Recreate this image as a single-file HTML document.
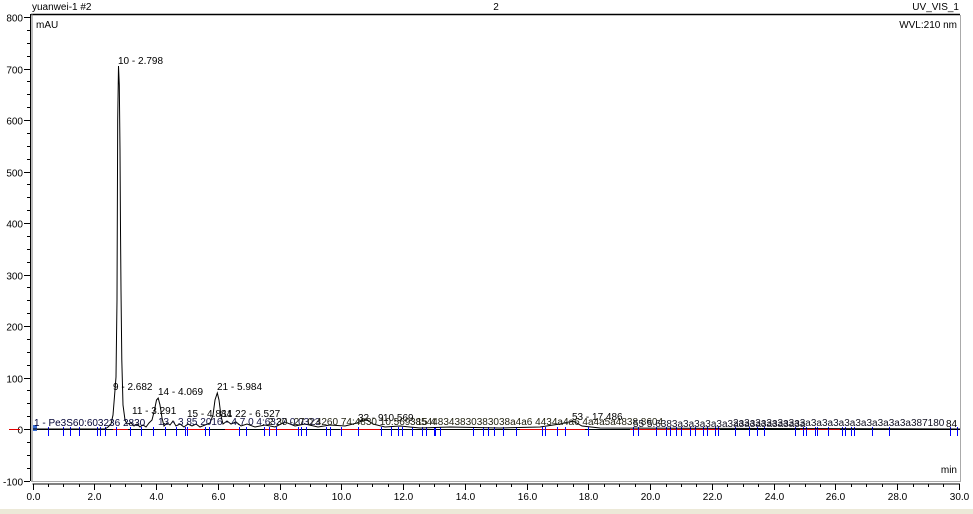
<!DOCTYPE html>
<html><head><meta charset="utf-8"><style>
html,body{margin:0;padding:0;background:#fff;width:973px;height:514px;overflow:hidden}
svg{display:block;font-family:"Liberation Sans",Arial,sans-serif}
</style></head><body>
<svg id="s" width="973" height="514" viewBox="0 0 973 514" xmlns="http://www.w3.org/2000/svg">
<rect x="0" y="0" width="973" height="514" fill="#fff"/>
<rect x="0" y="509" width="973" height="5" fill="#ece9d8"/>
<text x="32" y="10" font-size="10" fill="#000">yuanwei-1 #2</text>
<text x="496" y="10" font-size="10" fill="#000" text-anchor="middle">2</text>
<text x="959" y="10" font-size="10" fill="#000" text-anchor="end">UV_VIS_1</text>
<line x1="31" y1="14.5" x2="960" y2="14.5" stroke="#000" stroke-width="1.5"/>
<line x1="30.5" y1="14" x2="30.5" y2="481" stroke="#000" stroke-width="1"/>
<line x1="32" y1="14" x2="32" y2="481" stroke="#777" stroke-width="1"/>
<line x1="960.5" y1="15" x2="960.5" y2="481" stroke="#aaa" stroke-width="1"/>
<line x1="31" y1="481.5" x2="961" y2="481.5" stroke="#aaa" stroke-width="1"/>
<text x="36" y="28" font-size="10" fill="#000">mAU</text>
<text x="957" y="28" font-size="10" fill="#000" text-anchor="end">WVL:210 nm</text>
<text x="957" y="473" font-size="10" fill="#000" text-anchor="end">min</text>
<g id="axes" stroke="#000" stroke-width="1"></g>
<g id="lab" font-size="10" fill="#000"></g>
<line x1="33" y1="429.5" x2="960" y2="429.5" stroke="#000" stroke-width="1"/>
<g id="red" stroke="#e00000" stroke-width="1"></g>
<g id="blue" stroke="#0000ff" stroke-width="1"></g>
<path fill="none" stroke="#000" stroke-width="1" d="M33 429 L105 429 L108 427 L111 424 L113 415 L115 390 L116 377 L117 300 L117.7 120 L118.5 66 L119.3 85 L120 150 L120.5 230 L121 290 L121.8 360 L123 405 L125 420 L127 424 L131 423 L134 426 L137 424 L140 427 L143 425 L146 427 L149 423 L152 420 L154.5 410 L156.5 400 L158.2 398 L160 405 L162 418 L164 426 L167 423 L170 425 L173 421 L176 426 L180 424 L184 427 L188 424 L192 426 L196 424 L200 427 L205 425 L210 423 L213 415 L215 400 L217.3 393 L219 400 L221 416 L223 424 L227 421 L231 424 L236 422 L241 426 L247 424 L255 427 L265 425 L275 427 L285 422 L295 426 L305 424 L318 427 L330 425 L345 426 L357 423 L366 419 L373 424 L385 427 L400 426 L420 428 L450 427 L500 428 L540 427 L560 424 L573 421 L582 426 L600 428 L960 429"/>
<g font-size="10" fill="#000">
<text x="118" y="64">10 - 2.798</text>
<text x="113" y="390">9 - 2.682</text>
<text x="158" y="395">14 - 4.069</text>
<text x="217" y="390">21 - 5.984</text>
<text x="132" y="414">11 - 3.291</text>
<text x="187" y="417">15 - 4.884</text>
<text x="222" y="417">11  22 - 6.527</text>
<text x="358" y="421">32 - 9</text>
<text x="383" y="421">10.569</text>
<text x="572" y="420">53 - 17.486</text>
<text x="34" y="426" fill="#003">1 - Pe3S60:603236 2830</text>
<text x="158" y="425" fill="#114">13 - 3 85 2016 - 4.7 0 4:6327 0.0323</text>
<text x="268" y="425" fill="#221">2 30 ·27 0:4260 74:4830 10.569 ·15 4</text>
<text x="410" y="425" fill="#221">385448343830383038a4a6 4434a4a6 4a4a5a4838  8604</text>
<text x="633" y="427" fill="#112">55  5.6383a3a3a3a3a3a3a3a3a3a3a3a</text>
<text x="733" y="426" fill="#112">2a3a3a3a3a3a3a3a3a3a3a3a3a3a3a3a387180</text>
<text x="946" y="427">84</text>
</g>
</svg>
<script>
var NS="http://www.w3.org/2000/svg";
function el(p,t,a,txt){var e=document.createElementNS(NS,t);for(var k in a)e.setAttribute(k,a[k]);if(txt!=null)e.textContent=txt;document.getElementById(p).appendChild(e);}
function Y(v){return 429-0.515*v;}
function X(t){return 32.5+30.88*t;}
for(var v=-100;v<=800;v+=25){var y=Math.round(Y(v))+0.5;el("axes","line",{x1:(v%100==0?24:27),y1:y,x2:30,y2:y});
 if(v%100==0)el("lab","text",{x:23,y:y+4,"text-anchor":"end"},String(v));}
el("axes","line",{x1:32.5,y1:484,x2:960,y2:484});
for(var t=0;t<=30.001;t+=0.5){var x=Math.round(X(t))+0.5;var maj=Math.abs(t%2)<0.01;el("axes","line",{x1:x,y1:484,x2:x,y2:maj?490:487});
 if(maj||Math.abs(t-30)<0.01)el("lab","text",{x:x,y:500,"text-anchor":"middle"},t.toFixed(1));}
var bl=[0.5,1.0,1.2,1.5,2.1,2.2,2.35,2.7,3.15,3.5,3.9,4.3,4.65,4.95,5.0,5.6,5.7,6.7,6.9,7.5,7.65,7.9,8.6,8.7,8.85,9.5,9.65,10.0,10.55,11.3,11.6,11.85,11.95,12.3,12.6,12.75,13.0,13.05,13.2,14.25,14.6,14.75,14.95,15.25,15.65,16.5,16.6,17.0,17.25,18.0,19.45,19.6,20.2,20.5,20.65,20.85,21.0,21.3,21.45,21.7,21.85,22.1,22.2,22.75,23.2,23.45,23.7,24.7,24.95,25.05,25.35,25.4,25.75,26.2,26.3,26.5,26.6,27.2,27.75,29.7,29.95];
bl.forEach(function(t){var x=Math.round(X(t))+0.5;el("blue","line",{x1:x,y1:427,x2:x,y2:436});});
[[9,20],[113,128],[186,204],[225,240],[265,300],[340,380],[520,585],[630,720],[800,840]].forEach(function(r){el("red","line",{x1:r[0],y1:429.5,x2:r[1],y2:429.5});});
el("blue","rect",{x:33,y:425,width:4,height:6,fill:"#3a6fd8",stroke:"none"});
</script>
</body></html>
